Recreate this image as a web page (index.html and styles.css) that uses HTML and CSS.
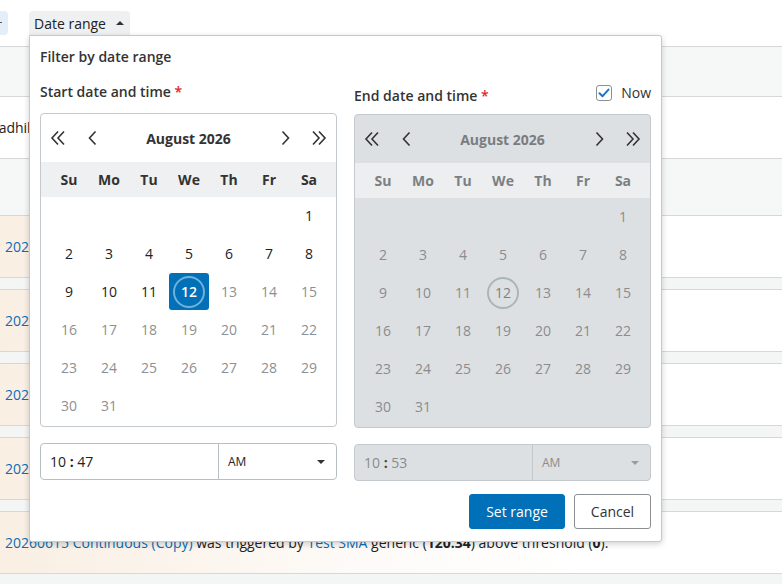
FILE: index.html
```html
<!DOCTYPE html>
<html>
<head>
  <title>Alerts</title>
  <link rel="stylesheet" href="styles.css">
</head>
<body>
  <div class="toolbar">
    <span class="chip"><span class="chip-mark"></span></span>
    <button class="filter-btn">Date range <span class="caret-up"></span></button>
  </div>

  <div class="list">
    <div class="band"></div>
    <div class="row plain"><span class="owner">Radhika</span></div>
    <div class="band tall"></div>
    <div class="row alert"><a href="#">20260615 Continuous</a></div>
    <div class="gap"></div>
    <div class="row alert"><a href="#">20260615 Continuous</a></div>
    <div class="gap"></div>
    <div class="row alert"><a href="#">20260615 Continuous</a></div>
    <div class="gap"></div>
    <div class="row alert"><a href="#">20260615 Continuous</a></div>
    <div class="gap"></div>
    <div class="row alert">
      <span><a href="#">20260615 Continuous (Copy)</a> was triggered by <a href="#">Test SMA</a> generic (<b>120.34</b>) above threshold (<b>0</b>).</span>
    </div>
    <div class="foot"></div>
  </div>

  <div class="popover">
    <div class="pop-title">Filter by date range</div>
    <div class="pop-cols">
      <div class="pop-col">
        <div class="col-head">
          <label class="field-label">Start date and time <span class="req">*</span></label>
        </div>
        <div class="calendar" id="cal-start"></div>
        <div class="time-input">
          <div class="time-val">10&nbsp;<b>:</b>&nbsp;47</div>
          <div class="ampm">AM <span class="caret-down"></span></div>
        </div>
      </div>
      <div class="pop-col">
        <div class="col-head end">
          <label class="field-label">End date and time <span class="req">*</span></label>
          <label class="now">
            <span class="checkbox">
              <svg width="12" height="10" viewBox="0 0 12 10"><path d="M1.5 5.2 L4.6 8.2 L10.5 1.6" fill="none" stroke="#1a74c9" stroke-width="2" stroke-linecap="round" stroke-linejoin="round"/></svg>
            </span>
            Now
          </label>
        </div>
        <div class="calendar disabled" id="cal-end"></div>
        <div class="time-input disabled">
          <div class="time-val">10&nbsp;<b>:</b>&nbsp;53</div>
          <div class="ampm">AM <span class="caret-down"></span></div>
        </div>
        <div class="actions">
          <button class="btn primary">Set range</button>
          <button class="btn">Cancel</button>
        </div>
      </div>
    </div>
  </div>

  <script>
    var dblLeft = '<svg width="16" height="16" viewBox="0 0 16 16"><path d="M8 1.5 L2 8 L8 14.5 M14 1.5 L8 8 L14 14.5" fill="none" stroke="#333" stroke-width="1.6"/></svg>';
    var left = '<svg width="9" height="16" viewBox="0 0 9 16"><path d="M7.5 1.5 L1.5 8 L7.5 14.5" fill="none" stroke="#333" stroke-width="1.6"/></svg>';
    var right = '<svg width="9" height="16" viewBox="0 0 9 16"><path d="M1.5 1.5 L7.5 8 L1.5 14.5" fill="none" stroke="#333" stroke-width="1.6"/></svg>';
    var dblRight = '<svg width="16" height="16" viewBox="0 0 16 16"><path d="M2 1.5 L8 8 L2 14.5 M8 1.5 L14 8 L8 14.5" fill="none" stroke="#333" stroke-width="1.6"/></svg>';

    function buildCalendar(el) {
      var html = '<div class="cal-head">' +
        '<span class="nav">' + dblLeft + '</span>' +
        '<span class="nav">' + left + '</span>' +
        '<span class="cal-title">August 2026</span>' +
        '<span class="nav">' + right + '</span>' +
        '<span class="nav">' + dblRight + '</span>' +
        '</div>';
      html += '<div class="cal-dow">';
      ["Su", "Mo", "Tu", "We", "Th", "Fr", "Sa"].forEach(function (d) {
        html += '<span>' + d + '</span>';
      });
      html += '</div><div class="cal-days">';
      // August 2026 starts on a Saturday
      for (var i = 0; i < 6; i++) html += '<span></span>';
      for (var day = 1; day <= 31; day++) {
        var cls = "day";
        if (day > 12) cls += " future";
        if (day === 12) cls += " today";
        html += '<span class="' + cls + '"><i>' + day + '</i></span>';
      }
      html += '</div>';
      el.innerHTML = html;
    }

    buildCalendar(document.getElementById("cal-start"));
    buildCalendar(document.getElementById("cal-end"));
  </script>
</body>
</html>
```

FILE: styles.css
```css
body {
  margin: 0;
  font-family: "Open Sans", "Noto Sans", sans-serif;
  font-size: 14px;
  color: #222;
  background-color: #ffffff;
  overflow: hidden;
  position: relative;
  height: 584px;
}

a {
  color: #0a6eb8;
  text-decoration: none;
}

/* top filter bar */
.toolbar {
  height: 47px;
  display: flex;
  align-items: flex-start;
  padding-top: 11px;
  box-sizing: border-box;
  border-bottom: 1px solid #d4d8da;
}

.chip {
  width: 8px;
  height: 24px;
  background-color: #e3eef8;
  border-radius: 0 4px 4px 0;
}

.chip-mark {
  display: block;
  width: 2px;
  height: 1px;
  background: #555;
  margin-top: 11px;
}

.filter-btn {
  margin-left: 21px;
  height: 24px;
  width: 101px;
  padding: 0 5px;
  border: none;
  background-color: #eef0f1;
  border-radius: 4px 4px 0 0;
  font-family: inherit;
  font-size: 14px;
  color: #222;
  display: flex;
  align-items: center;
  gap: 8px;
}

.caret-up {
  width: 0;
  height: 0;
  border-left: 4px solid transparent;
  border-right: 4px solid transparent;
  border-bottom: 4px solid #333;
  margin-left: 2px;
}

/* background list */
.band {
  height: 49px;
  background-color: #f6f7f7;
  border-bottom: 1px solid #d4d8da;
}

.band.tall {
  height: 56px;
  border-top: 1px solid #d4d8da;
}

.row {
  display: flex;
  align-items: center;
  padding-left: 5px;
  white-space: nowrap;
}

.row.plain {
  height: 61px;
  background: #fff;
}

.owner {
  margin-left: -15px;
}

.row.alert {
  height: 61px;
  background: linear-gradient(to right, #f9efe3, #fdfaf7 45%, #ffffff 75%);
}

.gap {
  height: 11px;
  background-color: #f4f5f5;
  border-top: 1px solid #d4d8da;
  border-bottom: 1px solid #d4d8da;
}

.foot {
  height: 12px;
  background-color: #f4f5f5;
  border-top: 1px solid #d4d8da;
}

/* popover */
.popover {
  position: absolute;
  left: 29px;
  top: 35px;
  width: 633px;
  height: 507px;
  box-sizing: border-box;
  background: #fff;
  border: 1px solid #c3c9cc;
  border-radius: 0 3px 3px 3px;
  box-shadow: 0 2px 6px rgba(0, 0, 0, 0.18);
  padding: 11px 10px 0 10px;
  color: #333;
}

.pop-title {
  line-height: 20px;
  font-weight: 600;
  color: #333;
}

.pop-cols {
  display: flex;
  gap: 17px;
  margin-top: 15px;
}

.pop-col {
  width: 297px;
}

.col-head {
  height: 20px;
  margin-bottom: 11px;
  display: flex;
}

.col-head.end {
  height: 24px;
  margin-bottom: 8px;
  justify-content: space-between;
}

.field-label {
  line-height: 20px;
  font-weight: 600;
  color: #333;
  align-self: flex-end;
}

.req {
  color: #e0262b;
}

.now {
  display: flex;
  align-items: center;
  gap: 9px;
  line-height: 20px;
  align-self: flex-start;
  margin-top: 1px;
  color: #333;
}

.checkbox {
  width: 14px;
  height: 14px;
  border: 1px solid #8c8f92;
  border-radius: 3px;
  display: flex;
  align-items: center;
  justify-content: center;
  background: #fff;
}

/* calendar */
.calendar {
  border: 1px solid #c3c9cc;
  border-radius: 4px;
  height: 314px;
  box-sizing: border-box;
  overflow: hidden;
}

.cal-head {
  height: 48px;
  display: flex;
  align-items: center;
}

.nav {
  width: 34px;
  display: flex;
  justify-content: center;
  align-items: center;
}

.cal-title {
  flex: 1;
  text-align: center;
  font-weight: 700;
  color: #333;
}

.cal-dow {
  height: 35px;
  background-color: #eef0f1;
  display: grid;
  grid-template-columns: repeat(7, 40px);
  padding: 0 8px;
  align-items: center;
  font-weight: 700;
  color: #333;
}

.cal-dow span,
.cal-days span {
  text-align: center;
}

.cal-days {
  display: grid;
  grid-template-columns: repeat(7, 40px);
  grid-auto-rows: 38px;
  padding: 0 8px;
}

.day {
  display: flex;
  align-items: center;
  justify-content: center;
  color: #222;
}

.day i {
  font-style: normal;
  width: 28px;
  height: 28px;
  line-height: 28px;
  border-radius: 50%;
  border: 2px solid transparent;
}

.day.future {
  color: #8f8f8f;
}

.day.today {
  background-color: #0070b8;
  border-radius: 3px;
  color: #fff;
  font-weight: 600;
  height: 37px;
}

.day.today i {
  border-color: rgba(255, 255, 255, 0.45);
}

.calendar.disabled {
  background-color: #dde0e3;
}

.calendar.disabled .cal-title {
  color: #7a7d80;
}

.calendar.disabled .cal-dow {
  background-color: #eceef0;
  color: #7c7f82;
}

.calendar.disabled .day {
  color: #8a8c8e;
}

.calendar.disabled .day.today {
  background: none;
  color: #7d8083;
  font-weight: 400;
}

.calendar.disabled .day.today i {
  border-color: #aab5ba;
}

/* time field */
.time-input {
  margin-top: 16px;
  height: 37px;
  box-sizing: border-box;
  border: 1px solid #b8bfc3;
  border-radius: 4px;
  display: flex;
}

.time-val {
  width: 178px;
  box-sizing: border-box;
  border-right: 1px solid #b8bfc3;
  padding-left: 9px;
  display: flex;
  align-items: center;
  color: #222;
}

.time-val b {
  font-weight: 700;
}

.ampm {
  flex: 1;
  padding: 0 11px 0 9px;
  display: flex;
  align-items: center;
  justify-content: space-between;
  font-size: 12px;
  color: #222;
}

.caret-down {
  width: 0;
  height: 0;
  border-left: 4px solid transparent;
  border-right: 4px solid transparent;
  border-top: 4px solid #333;
}

.time-input.disabled {
  background-color: #dde0e3;
  border-color: #c3c9cc;
}

.time-input.disabled .time-val {
  border-right-color: #c3c9cc;
}

.time-input.disabled .time-val,
.time-input.disabled .ampm {
  color: #8a8c8e;
}

.time-input.disabled .time-val b {
  color: #444;
}

.time-input.disabled .caret-down {
  border-top-color: #9a9c9e;
}

/* buttons */
.actions {
  display: flex;
  justify-content: flex-end;
  gap: 9px;
  margin-top: 13px;
}

.btn {
  height: 35px;
  width: 77px;
  padding: 0;
  border: 1px solid #8c8f92;
  border-radius: 3px;
  background: #fff;
  font-family: inherit;
  font-size: 14px;
  color: #333;
  white-space: nowrap;
}

.btn.primary {
  width: 96px;
  background-color: #0070b8;
  border-color: #0070b8;
  color: #fff;
}
```
